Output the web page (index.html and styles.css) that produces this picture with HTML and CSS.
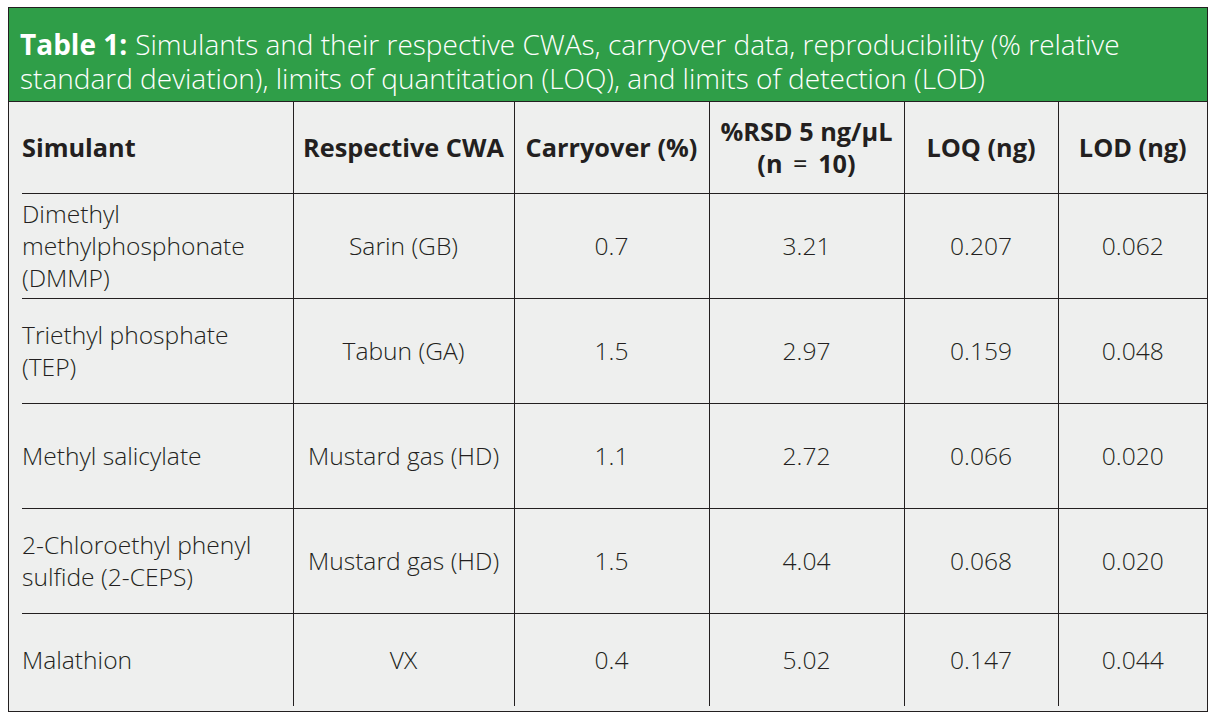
FILE: index.html
```html
<!DOCTYPE html>
<html>
<head>
<meta charset="utf-8">
<link rel="stylesheet" href="styles.css">
</head>
<body>
<div class="box">
  <div class="caption"><b class="label">Table 1:</b><span class="title">Simulants and their respective CWAs, carryover data, reproducibility (% relative standard deviation), limits of quantitation (LOQ), and limits of detection (LOD)</span></div>
  <div class="body">
    <table class="data">
      <colgroup>
        <col class="c1"><col class="c2"><col class="c3"><col class="c4"><col class="c5"><col class="c6">
      </colgroup>
      <thead>
        <tr class="head">
          <th class="first">Simulant</th>
          <th>Respective CWA</th>
          <th>Carryover (%)</th>
          <th>%RSD 5 ng/µL<br>(n <span class="eq">=</span> 10)</th>
          <th>LOQ (ng)</th>
          <th>LOD (ng)</th>
        </tr>
      </thead>
      <tbody>
        <tr class="row">
          <td class="first">Dimethyl<br>methylphosphonate<br>(DMMP)</td>
          <td>Sarin (GB)</td><td>0.7</td><td>3.21</td><td>0.207</td><td>0.062</td>
        </tr>
        <tr class="row">
          <td class="first">Triethyl phosphate<br>(TEP)</td>
          <td>Tabun (GA)</td><td>1.5</td><td>2.97</td><td>0.159</td><td>0.048</td>
        </tr>
        <tr class="row">
          <td class="first">Methyl salicylate</td>
          <td>Mustard gas (HD)</td><td>1.1</td><td>2.72</td><td>0.066</td><td>0.020</td>
        </tr>
        <tr class="row">
          <td class="first">2-Chloroethyl phenyl<br>sulfide (2-CEPS)</td>
          <td>Mustard gas (HD)</td><td>1.5</td><td>4.04</td><td>0.068</td><td>0.020</td>
        </tr>
        <tr class="row last">
          <td class="first">Malathion</td>
          <td>VX</td><td>0.4</td><td>5.02</td><td>0.147</td><td>0.044</td>
        </tr>
      </tbody>
    </table>
  </div>
</div>
</body>
</html>
```
FILE: styles.css
```css
html, body {
  margin: 0;
  padding: 0;
  background: #ffffff;
}
body {
  padding: 7px 0 0 8px;
  font-family: "Open Sans", "Noto Sans", sans-serif;
  color: #231f20;
}
.box {
  width: 1200px;
  box-sizing: border-box;
  border: 1px solid #231f20;
  background: #eeefee;
}
.caption {
  background: #2f9e48;
  color: #ffffff;
  font-size: 28px;
  font-weight: 300;
  line-height: 34px;
  height: 94px;
  box-sizing: border-box;
  padding: 19px 50px 0 11px;
  border-bottom: 1px solid #231f20;
}
.caption .label {
  font-weight: 700;
  margin-right: 8px;
}
.body {
  padding: 0 0 5px 13px;
}
.data {
  border-collapse: collapse;
  table-layout: fixed;
  width: 1185px;
  font-size: 24.6px;
  line-height: 32px;
}
.c1 { width: 271px; }
.c2 { width: 221px; }
.c3 { width: 195px; }
.c4 { width: 195px; }
.c5 { width: 154px; }
.c6 { width: 149px; }
.data th, .data td {
  padding: 0;
  text-align: center;
  vertical-align: middle;
  border-right: 1px solid #231f20;
  border-bottom: 1px solid #231f20;
}
.data td {
  font-weight: 300;
}
.data th:last-child, .data td:last-child {
  border-right: none;
}
.data th {
  font-weight: 700;
  font-size: 25.3px;
}
.data .eq {
  font-weight: 400;
  margin: 0 4px;
}
.data .first {
  text-align: left;
}
.head { height: 91px; }
.row { height: 105px; }
.row.last { height: 93px; }
.row.last td { border-bottom: none; }
```
